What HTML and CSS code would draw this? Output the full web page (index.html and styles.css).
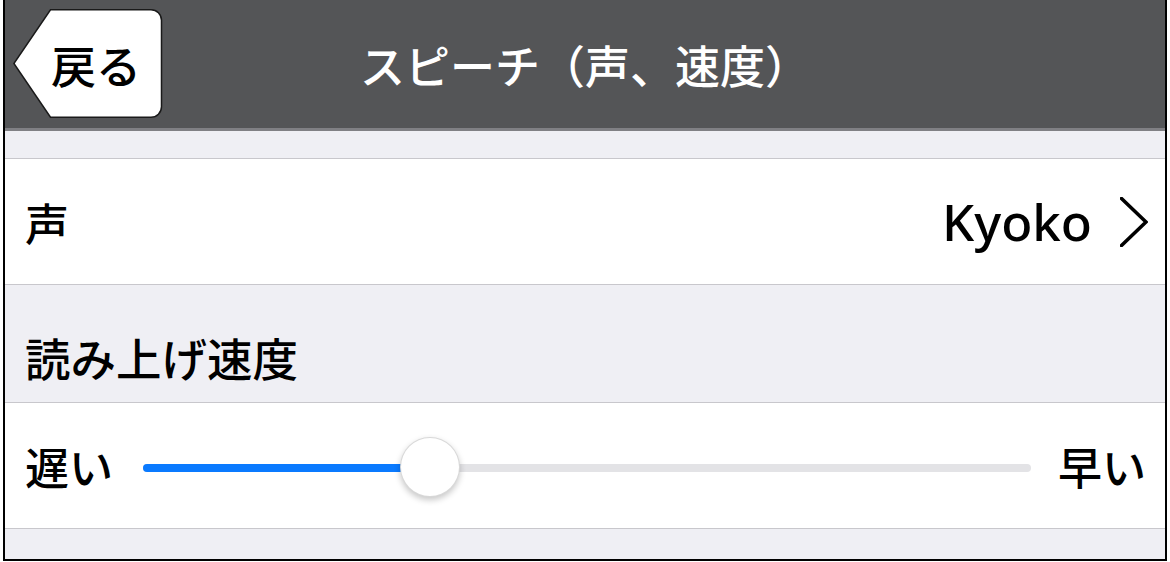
FILE: index.html
```html
<!DOCTYPE html>
<html lang="ja">
<head>
<meta charset="utf-8">
<link rel="stylesheet" href="styles.css">
</head>
<body>
<div class="frame">
  <header class="navbar">
    <div class="nav-left">
      <div class="back">
        <svg class="back-shape" width="150" height="110" viewBox="0 0 150 110">
          <path d="M37.5 0.75 H138 A10.5 10.5 0 0 1 148.5 11.25 V97.75 A10.5 10.5 0 0 1 138 108.25 H37.5 L0.9 54.5 Z" fill="#fff" stroke="#1a1a1a" stroke-width="1.5"/>
        </svg>
        <span class="back-label">戻る</span>
      </div>
    </div>
    <h1 class="title">スピーチ（声、速度）</h1>
    <div class="nav-right"></div>
  </header>
  <div class="gap gap-top"></div>
  <div class="row voice-row">
    <span class="label">声</span>
    <span class="value">Kyoko</span>
    <svg class="chevron" width="28" height="50" viewBox="0 0 28 50">
      <polyline points="1.5,1.5 26,25 1.5,48.5" fill="none" stroke="#000" stroke-width="3.6" stroke-linecap="round" stroke-linejoin="miter"/>
    </svg>
  </div>
  <div class="section-header">読み上げ速度</div>
  <div class="row slider-row">
    <span class="label">遅い</span>
    <div class="track">
      <div class="fill" style="width:32.3%"></div>
      <div class="thumb" style="left:32.3%"></div>
    </div>
    <span class="label">早い</span>
  </div>
  <div class="gap gap-bottom"></div>
</div>
</body>
</html>
```
FILE: styles.css
```css
html, body {
  margin: 0;
  padding: 0;
  background: #fff;
}
body {
  font-family: "Noto Sans CJK JP", "Noto Sans", sans-serif;
  font-weight: 500;
  color: #000;
}
.frame {
  margin-left: 3px;
  width: 1164px;
  height: 561px;
  box-sizing: border-box;
  border: 2px solid #000;
  border-top: none;
  background: #efeff4;
  display: flex;
  flex-direction: column;
  overflow: hidden;
}
.navbar {
  height: 128px;
  flex: none;
  background: #545557;
  border-bottom: 3px solid #808084;
  display: grid;
  grid-template-columns: 1fr auto 1fr;
  align-items: center;
}
.nav-left {
  padding-left: 8px;
  display: flex;
  align-items: center;
}
.back {
  position: relative;
  width: 150px;
  height: 110px;
  display: flex;
  align-items: center;
}
.back-shape {
  position: absolute;
  left: 0;
  top: 0;
}
.back-label {
  position: relative;
  padding-left: 38px;
  font-size: 45px;
  line-height: 1;
  color: #000;
}
.title {
  margin: 0;
  font-size: 45px;
  font-weight: 500;
  color: #fff;
  line-height: 1;
  white-space: nowrap;
}
.gap {
  flex: none;
}
.gap-top {
  height: 27px;
  border-bottom: 1px solid #c8c7cc;
}
.row {
  height: 125px;
  flex: none;
  background: #fff;
  border-bottom: 1px solid #c8c7cc;
  display: flex;
  align-items: center;
  padding: 0 17px 0 20px;
  box-sizing: content-box;
}
.label {
  font-size: 44px;
  line-height: 1;
  white-space: nowrap;
}
.voice-row .label {
  flex: 1;
}
.value {
  font-family: "Noto Sans", sans-serif;
  font-size: 51px;
  line-height: 1;
  margin-right: 28px;
}
.chevron {
  flex: none;
  display: block;
}
.section-header {
  height: 118px;
  flex: none;
  border-bottom: 1px solid #c8c7cc;
  box-sizing: border-box;
  display: flex;
  align-items: flex-end;
  padding: 0 0 22px 20px;
  font-size: 45.5px;
  line-height: 1;
}
.slider-row {
  padding: 0 19px 0 20px;
}
.track {
  position: relative;
  flex: 1;
  height: 8px;
  border-radius: 4px;
  background: #e3e3e6;
  margin: 4px 27px 0 30px;
}
.fill {
  height: 100%;
  border-radius: 4px 0 0 4px;
  background: #0a7aff;
}
.thumb {
  position: absolute;
  top: 50%;
  width: 60px;
  height: 60px;
  margin: -31px 0 0 -30px;
  border-radius: 50%;
  background: #fff;
  box-sizing: border-box;
  border: 1px solid rgba(0, 0, 0, 0.15);
  box-shadow: 0 3px 6px rgba(0, 0, 0, 0.22);
}
.gap-bottom {
  flex: 1;
}
```
